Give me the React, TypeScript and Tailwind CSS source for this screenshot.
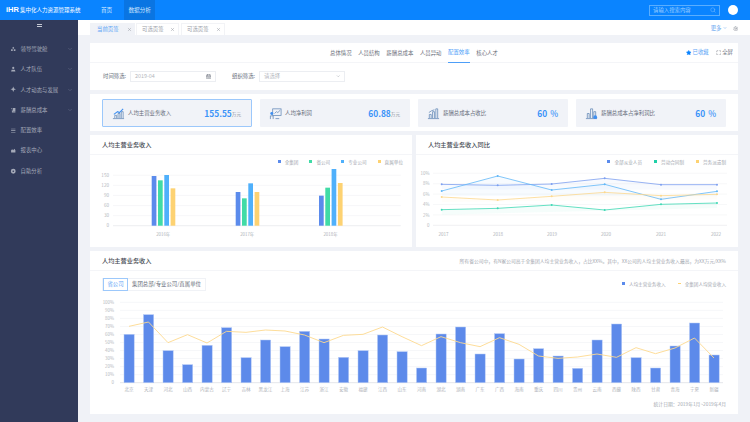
import { ChevronDown, CalendarDays, Search, X, Star, Maximize, Settings } from "lucide-react";
import type { ReactNode } from "react";

const font = { fontFamily: '"Noto Sans CJK SC", "Noto Sans", sans-serif' };

const menus = [
  { title: "领导驾驶舱", arrow: true, d: "M6 1.5l2 2-2 2-2-2zM2 6h3v3H2zM7 6h3v3H7z" },
  { title: "人才队伍", arrow: true, d: "M6 1.5a2 2 0 110 4 2 2 0 010-4zM2 10l1-3h6l1 3z" },
  { title: "人才动态与发展", arrow: true, d: "M6 1l1.5 3.5L11 6 7.5 7.5 6 11 4.5 7.5 1 6l3.5-1.5z" },
  { title: "薪酬总成本", arrow: true, d: "M2 2h1.5v8H10v-1.5H5V2h5v6H5z" },
  { title: "配置效率", arrow: false, d: "M2 3h8v1.2H2zM2 6h8v1.2H2zM2 9h8v1.2H2z" },
  { title: "报表中心", arrow: false, d: "M2 10V6l2-2 2 2 2-3 2 3v4z" },
  { title: "自助分析", arrow: false, d: "M6 1.5a4.5 4.5 0 110 9 4.5 4.5 0 010-9zM6 4.5a1.5 1.5 0 100 3 1.5 1.5 0 000-3z" },
];

const subNav = ["总体情况", "人员结构", "薪酬总成本", "人员异动", "配置效率", "核心人才"];

const bars = [
  { label: "2016年", x: 151.7, tops: [243, 256, 240, 280] },
  { label: "2017年", x: 235.7, tops: [291, 310, 265, 291] },
  { label: "2018年", x: 319, tops: [302, 278, 222, 264] },
];
const barColors = ["#5b8bec", "#41dba6", "#4fb0fb", "#fdd272"];

const lineX = [441.7, 497.7, 551.7, 604.7, 661, 717];
const lineSeries = [
  { color: "#7d9ff0", ys: [268, 271, 267, 250, 269, 269] },
  { color: "#62b8f8", ys: [288, 243, 285, 268, 313, 289] },
  { color: "#fcd88e", ys: [306, 315, 304, 292, 302, 298] },
  { color: "#3fd8b4", ys: [344, 340, 330, 345, 328, 324] },
];

const provinces = [
  ["北京", 253, 229], ["天津", 194, 216], ["河北", 302, 278], ["山西", 344, 254], ["内蒙古", 286, 279],
  ["辽宁", 233, 244], ["吉林", 323, 247], ["黑龙江", 270, 240], ["上海", 290, 243], ["江苏", 244, 255],
  ["浙江", 267, 278], ["安徽", 322, 256], ["福建", 302, 253], ["江西", 255, 231], ["山东", 305, 260],
  ["河南", 354, 287], ["湖北", 252, 260], ["湖南", 231, 278], ["广东", 312, 290], ["广西", 251, 263],
  ["海南", 327, 283], ["重庆", 296, 318], ["四川", 318, 325], ["贵州", 355, 321], ["云南", 270, 312],
  ["西藏", 222, 322], ["陕西", 323, 293], ["甘肃", 354, 311], ["青海", 288, 294], ["宁夏", 219, 264],
  ["新疆", 315, 324],
] as [string, number, number][];

function KpiIcon({ variant }: { variant: number }) {
  return (
    <svg viewBox="0 0 14 14" className="h-[13px] w-[13px] shrink-0" fill="none" stroke="#5f86b5" strokeWidth="0.8">
      {variant === 0 && (
        <>
          <path d="M1 12.5h12M3 12V9h2v3M6.5 12V7h2v5M10 12V5h2v7" />
          <path d="M2 8l4-3 2 1 4-4" stroke="#3f8ff0" strokeWidth="1.2" />
        </>
      )}
      {variant === 1 && (
        <>
          <rect x="4" y="2" width="9" height="7" />
          <circle cx="3" cy="7" r="1.6" fill="#3f8ff0" stroke="none" />
          <path d="M1.5 13V9.5h3V13M7 12.5h4M6 7l2-2 1.5 1L12 3.5" />
        </>
      )}
      {variant === 2 && <path d="M1 12.5h12M2.5 12V8h2v4M6 12V5h2v7M9.5 12V2h2v10M2 6l3-2 3-1" />}
      {variant === 3 && (
        <>
          <path d="M1 12.5h12M2.5 12V7h2v5M6 12V2h2.2v10M9.5 12V5h2v7" />
          <circle cx="11" cy="11" r="2" fill="#3f8ff0" stroke="none" />
        </>
      )}
    </svg>
  );
}

function Kpi({ title, value, unit, variant, active }: { title: string; value: string; unit: string; variant: number; active?: boolean }) {
  return (
    <div
      className={`flex h-[28px] w-[150px] items-center rounded-[1px] bg-[#f1f3f8] pr-[10px] pl-[9px] ${
        active ? "border border-[#9cc8fb]" : ""
      }`}
    >
      <KpiIcon variant={variant} />
      <span className="ml-[3px] text-[5.4px] text-[#666c78]">{title}</span>
      <span className="ml-auto text-[8.4px] font-bold text-[#3b93f8]">{value}</span>
      {unit === "%" ? (
        <span className="ml-[3px] text-[8.4px] font-medium text-[#3b93f8]">%</span>
      ) : (
        <span className="mt-[2px] text-[4.6px] text-[#8b909a]">{unit}</span>
      )}
    </div>
  );
}

function Legend({ items, dash }: { items: [string, string][]; dash?: boolean }) {
  return (
    <>
      {items.map(([label, color], i) => (
        <span key={label} className="flex items-center gap-[4px] text-[4.6px] text-[#a3a7af]">
          {dash && i === 1 ? (
            <span className="h-[1px] w-[3px]" style={{ backgroundColor: color }} />
          ) : (
            <span className="h-[3px] w-[3px]" style={{ backgroundColor: color }} />
          )}
          {label}
        </span>
      ))}
    </>
  );
}

function SectionTitle({ children, right }: { children: ReactNode; right?: ReactNode }) {
  return (
    <div className="flex h-[20px] items-center justify-between border-b border-[#f4f5f8] pr-[12px] pl-[12px]">
      <span className="text-[6.2px] font-medium text-[#444952]">{children}</span>
      {right}
    </div>
  );
}

// bar chart, coordinates are the page's own so the svg is offset by viewBox
function IncomeBars() {
  const toY = (zy: number) => 95 + zy / 3;
  return (
    <svg viewBox="90 155 322 92" className="h-[92px] w-[322px]">
      {[0, 1, 2, 3, 4, 5].map((i) => {
        const y = 175.3 + i * 10.08;
        return <line key={i} x1="113" x2="400.7" y1={y} y2={y} stroke={i === 5 ? "#e4e6ea" : "#f3f4f6"} strokeWidth="0.7" />;
      })}
      {["150", "120", "90", "60", "30", "0"].map((t, i) => (
        <text key={t} x="109" y={176.8 + i * 10.08} textAnchor="end" fontSize="4.6" fill="#b4b7bd">
          {t}
        </text>
      ))}
      {bars.map((group) => (
        <g key={group.label}>
          {group.tops.map((top, i) => (
            <rect key={i} x={group.x + i * 6.3} y={toY(top)} width="4.7" height={225.7 - toY(top)} fill={barColors[i]} />
          ))}
          <text x={group.x + 11.5} y="235.5" textAnchor="middle" fontSize="4.4" fill="#b0b3b9">
            {group.label}
          </text>
        </g>
      ))}
    </svg>
  );
}

function RatioLines() {
  const toY = (zy: number) => 95 + zy / 3;
  return (
    <svg viewBox="416 155 322 92" className="h-[92px] w-[322px]">
      {[0, 1, 2, 3, 4, 5].map((i) => {
        const y = 173.3 + i * 10.4;
        return <line key={i} x1="433" x2="727" y1={y} y2={y} stroke={i === 5 ? "#e9eaee" : "#f4f5f7"} strokeWidth="0.7" />;
      })}
      {["10%", "8%", "6%", "4%", "2%", "0"].map((t, i) => (
        <text key={t} x="429.5" y={174.9 + i * 10.4} textAnchor="end" fontSize="4.4" fill="#b4b7bd">
          {t}
        </text>
      ))}
      {lineSeries.map((s) => {
        const pts = s.ys.map((zy, i) => `${lineX[i]},${toY(zy)}`).join(" ");
        return (
          <g key={s.color}>
            <polygon
              points={`${lineX[0]},${toY(s.ys[0]) + 5} ${pts} ${lineX[5]},${toY(s.ys[5]) + 5}`}
              fill={s.color}
              opacity="0.05"
            />
            <polyline points={pts} fill="none" stroke={s.color} strokeWidth="0.8" />
            {s.ys.map((zy, i) => (
              <circle key={i} cx={lineX[i]} cy={toY(zy)} r="1" fill={s.color} />
            ))}
          </g>
        );
      })}
      {["2017", "2018", "2019", "2020", "2021", "2022"].map((t, i) => (
        <text key={t} x={[443.5, 498, 552, 606, 661, 716][i]} y="235.5" textAnchor="middle" fontSize="4.6" fill="#b0b3b9">
          {t}
        </text>
      ))}
    </svg>
  );
}

function ProvinceChart() {
  const toY = (zy: number) => 250 + zy / 3;
  const barX = (i: number) => 124 + i * 19.5;
  const linePts = provinces.map((p, i) => `${barX(i) + 5},${toY(p[2])}`).join(" ");
  return (
    <svg viewBox="90 297 648 95" className="h-[95px] w-[648px]">
      {Array.from({ length: 11 }).map((_, i) => {
        const y = 302.3 + i * 8.04;
        return (
          <g key={i}>
            <line x1="120" x2="723" y1={y} y2={y} stroke={i === 10 ? "#e4e6ea" : "#f6f7f9"} strokeWidth="1" />
            <text x="114" y={y + 1.6} textAnchor="end" fontSize="4.4" fill="#b4b7bd">
              {i === 10 ? "0" : `${100 - i * 10}%`}
            </text>
          </g>
        );
      })}
      {provinces.map(([name, top], i) => (
        <g key={name}>
          <rect
            x={barX(i)}
            y={toY(top)}
            width="10.2"
            height={382.7 - toY(top)}
            fill="#5d8aea"
            stroke="#b5caf6"
            strokeWidth="0.5"
          />
          <text x={barX(i) + 5} y="390.8" textAnchor="middle" fontSize="4.6" fill="#b0b3b9">
            {name}
          </text>
        </g>
      ))}
      <polyline points={linePts} fill="none" stroke="#fdd98e" strokeWidth="0.9" />
    </svg>
  );
}

export default function App() {
  return (
    <div className="flex h-[422px] w-[750px] flex-col overflow-hidden bg-[#f0f2f7]" style={font}>
      {/* Header */}
      <header className="flex h-[20px] shrink-0 items-center bg-[#0a84ff] text-white">
        <div className="flex w-[98px] items-center pl-[6px]">
          <span
            className="w-[14px] shrink-0 text-[7.5px] leading-none font-bold"
            style={{ fontFamily: '"Liberation Sans", sans-serif' }}
          >
            iHR
          </span>
          <span className="text-[5.5px] whitespace-nowrap">集中化人力资源管理系统</span>
        </div>
        <span className="ml-[3px] text-[5.6px] text-[#cfe6ff]">首页</span>
        <span className="ml-[12px] flex h-full w-[31px] items-center justify-center bg-[#0a75e2] text-[5.6px] text-[#cfe6ff]">数据分析</span>
        <div className="ml-auto flex h-[11px] w-[71px] items-center justify-between border border-[#5aaeff] px-[3px] text-[5.4px] text-[#9ccdff]">
          请输入搜索内容
          <Search className="h-[6px] w-[6px]" strokeWidth={1.5} />
        </div>
        <span className="mr-[12px] ml-[8px] h-[10px] w-[10px] rounded-full bg-white" />
      </header>

      <div className="flex min-h-0 flex-1">
        {/* Sidebar */}
        <aside className="w-[78px] shrink-0 bg-[#313a5a]">
          <div className="flex h-[10px] flex-col items-center justify-center gap-[1px]">
            <span className="h-[0.8px] w-[5px] bg-[#c5c9d4]" />
            <span className="h-[0.8px] w-[5px] bg-[#c5c9d4]" />
          </div>
          <nav className="mt-[11.5px] flex flex-col gap-[5.3px]">
            {menus.map((m) => (
              <div key={m.title} className="flex h-[15px] items-center pr-[5px] pl-[10px] text-[5.4px] text-[#a4a9b8]">
                <svg viewBox="0 0 12 12" className="mr-[4px] h-[6.5px] w-[6.5px]" fill="#a4a9b8">
                  <path d={m.d} />
                </svg>
                {m.title}
                {m.arrow && <ChevronDown className="ml-auto h-[6px] w-[6px] text-[#7a8198]" strokeWidth={1.5} />}
              </div>
            ))}
          </nav>
        </aside>

        <main className="min-w-0 flex-1">
          {/* Tabs */}
          <div className="flex h-[15px] items-end bg-white pl-[12px] pr-[12px]">
            <div className="flex h-[12px] w-[45px] items-center justify-between bg-[#f0f2f7] pr-[3px] pl-[7px] text-[5.4px] text-[#5ea6f6]">
              当前页签
              <X className="h-[5px] w-[5px] text-[#8a8f99]" />
            </div>
            <div className="ml-[1px] flex h-[12px] w-[43px] items-center justify-between border-x border-t border-[#f2f3f6] pr-[3px] pl-[5px] text-[5.4px] text-[#9a9ea7]">
              可选页签
              <X className="h-[5px] w-[5px] text-[#8a8f99]" />
            </div>
            <div className="ml-[2px] flex h-[12px] w-[44px] items-center justify-between border-x border-t border-[#f2f3f6] pr-[3px] pl-[5px] text-[5.4px] text-[#9a9ea7]">
              可选页签
              <X className="h-[5px] w-[5px] text-[#8a8f99]" />
            </div>
            <div className="mb-[2.5px] ml-auto flex items-center gap-[1px] text-[5.4px] text-[#6daaf0]">
              更多
              <ChevronDown className="h-[4px] w-[4px]" strokeWidth={3} />
              <Settings className="ml-[5px] h-[5.5px] w-[5.5px] text-[#8a8f99]" />
            </div>
          </div>

          <div className="flex w-[660px] flex-col pt-[8px] pl-[12px]">
            {/* Sub nav + filters */}
            <section className="bg-white">
              <div className="relative flex h-[20px] items-center justify-end border-b border-[#f4f5f8] pr-[5px] text-[5.4px] text-[#6b707b]">
                <div className="absolute top-0 left-[240px] flex h-[20px] items-center gap-[6.6px]">
                  {subNav.map((t) =>
                    t === "配置效率" ? (
                      <span key={t} className="flex h-[20px] items-center border-b border-[#4d9ef8] text-[#4d9ef8]">
                        {t}
                      </span>
                    ) : (
                      <span key={t}>{t}</span>
                    ),
                  )}
                </div>
                <span className="flex items-center gap-[1px] text-[#5ea6f6]">
                  <Star className="h-[5.5px] w-[5.5px] fill-[#0a84ff] text-[#0a84ff]" />
                  已收藏
                </span>
                <span className="ml-[7px] flex items-center gap-[1px]">
                  <Maximize className="h-[5.5px] w-[5.5px]" />
                  全屏
                </span>
              </div>
              <div className="flex h-[27px] items-center pl-[13px] text-[5.4px] text-[#666c78]">
                <span className="w-[27px]">时间筛选:</span>
                <div className="flex h-[11.5px] w-[86px] items-center justify-between border border-[#eceef2] px-[4px] text-[#b4b7bd]">
                  2019-04
                  <CalendarDays className="h-[5.5px] w-[5.5px] text-[#5c6270]" />
                </div>
                <span className="ml-[16px] w-[27px]">组织筛选:</span>
                <div className="flex h-[11.5px] w-[86px] items-center justify-between border border-[#eceef2] px-[4px] text-[#b4b7bd]">
                  请选择
                  <ChevronDown className="h-[4.5px] w-[4.5px] text-[#8a8f99]" />
                </div>
              </div>
            </section>

            {/* KPI row */}
            <section className="mt-[4px] flex gap-[8px] bg-white px-[12px] pt-[5px] pb-[4px]">
              <Kpi title="人均主营业务收入" value="155.55" unit="万元" variant={0} active />
              <Kpi title="人均净利润" value="60.88" unit="万元" variant={1} />
              <Kpi title="薪酬总成本占收比" value="60" unit="%" variant={2} />
              <Kpi title="薪酬总成本占净利润比" value="60" unit="%" variant={3} />
            </section>

            {/* Charts */}
            <div className="mt-[4px] flex gap-[4px]">
              <section className="h-[112px] w-[322px] bg-white">
                <SectionTitle>人均主营业务收入</SectionTitle>
                <div className="relative">
                  <div className="absolute top-[3.5px] right-[9px] flex gap-[11px]">
                    <Legend items={[["全集团", "#5b8bec"], ["省公司", "#41dba6"], ["专业公司", "#4fb0fb"], ["直属单位", "#fdd272"]]} />
                  </div>
                  <IncomeBars />
                </div>
              </section>
              <section className="h-[112px] w-[322px] bg-white">
                <SectionTitle>人均主营业务收入同比</SectionTitle>
                <div className="relative">
                  <div className="absolute top-[3.5px] right-[12px] flex gap-[12px]">
                    <Legend items={[["全部从业人员", "#5b8bec"], ["劳动合同制", "#1fd0a8"], ["劳务派遣制", "#fdd272"]]} />
                  </div>
                  <RatioLines />
                </div>
              </section>
            </div>

            {/* Province chart */}
            <section className="mt-[4px] h-[163px] bg-white">
              <SectionTitle right={<span className="text-[4.8px] text-[#a3a7af]">所有省公司中，有N家公司高于全集团人均主营业务收入，占比XX%。其中，XX公司的人均主营业务收入最高，为XX万元/XX%</span>}>
                人均主营业务收入
              </SectionTitle>
              <div className="flex h-[26px] items-center justify-between px-[12px]">
                <div className="flex h-[13px] items-center border border-[#f0f2f6] text-[5.4px] text-[#666c78]">
                  <span className="flex h-[13px] w-[25px] items-center justify-center border border-[#9cc8fb] text-[#5ea6f6]">省公司</span>
                  <span className="px-[4px]">集团总部/专业公司/直属单位</span>
                </div>
                <div className="flex gap-[12px]">
                  <Legend dash items={[["人均主营业务收入", "#5b8bec"], ["全集团人均营业收入", "#fdd272"]]} />
                </div>
              </div>
              <ProvinceChart />
              <div className="pt-[8px] pr-[12px] text-right text-[4.8px] text-[#a3a7af]">统计日期：2019年1月~2019年4月</div>
            </section>
          </div>
        </main>
      </div>
    </div>
  );
}
